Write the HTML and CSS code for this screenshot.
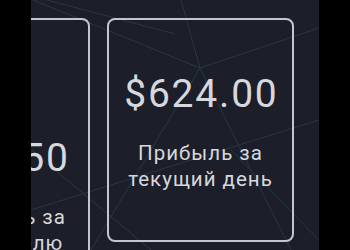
FILE: index.html
```html
<!DOCTYPE html>
<html lang="ru">
<head>
<meta charset="utf-8">
<link rel="stylesheet" href="styles.css">
</head>
<body>
<div class="screen">
  <svg class="bg-lines" width="288" height="250" viewBox="0 0 288 250" aria-hidden="true">
    <g stroke="#35606a" stroke-width="1" fill="none" opacity="0.4">
      <line x1="2" y1="0" x2="169" y2="68"/>
      <line x1="16" y1="0" x2="144" y2="34"/>
      <line x1="169" y1="68" x2="288" y2="28"/>
      <line x1="169" y1="68" x2="150" y2="0"/>
      <line x1="169" y1="68" x2="260" y2="250"/>
      <line x1="169" y1="68" x2="60" y2="250"/>
      <line x1="0" y1="210" x2="288" y2="120"/>
      <line x1="0" y1="150" x2="120" y2="250"/>
      <line x1="200" y1="150" x2="288" y2="240"/>
    </g>
  </svg>
  <div class="row">
    <div class="card card-tall">
      <div class="value">$87.50</div>
      <div class="label">Прибыль за<br>эту неделю</div>
    </div>
    <div class="card">
      <div class="value">$624.00</div>
      <div class="label">Прибыль за<br>текущий день</div>
    </div>
  </div>
</div>
</body>
</html>
```

FILE: styles.css
```css
html, body {
  margin: 0;
  padding: 0;
  background: #000;
  width: 350px;
  height: 250px;
  overflow: hidden;
}
.screen {
  position: relative;
  margin-left: 31px;
  width: 288px;
  height: 250px;
  background: #1c1e2a;
  overflow: hidden;
  font-family: Roboto, "Noto Sans", sans-serif;
  color: #d6d8dd;
}
.bg-lines {
  position: absolute;
  left: 0;
  top: 0;
}
.row {
  position: relative;
  display: flex;
  align-items: flex-start;
  gap: 17px;
  padding-top: 18px;
  margin-left: -114px;
}
.card {
  flex: none;
  box-sizing: border-box;
  width: 187px;
  height: 224px;
  border: 2px solid #c3c6ce;
  border-radius: 8px;
  display: flex;
  flex-direction: column;
  align-items: center;
  justify-content: center;
  text-align: center;
  padding-top: 3px;
}
.card-tall {
  width: 173px;
  height: 352px;
}
.value {
  font-size: 39px;
  line-height: 46px;
  letter-spacing: 1.8px;
  margin-right: -1.8px;
}
.label {
  margin-top: 23px;
  font-size: 20.5px;
  line-height: 26px;
  letter-spacing: 1px;
}
```
